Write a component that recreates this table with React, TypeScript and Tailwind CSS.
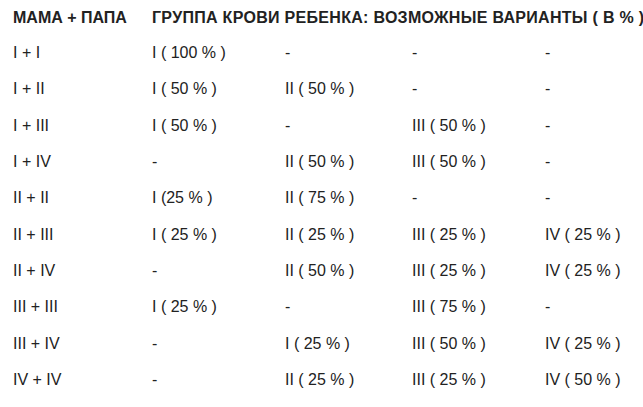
const rows: [string, string, string, string, string][] = [
  ["I + I", "I ( 100 % )", "-", "-", "-"],
  ["I + II", "I ( 50 % )", "II ( 50 % )", "-", "-"],
  ["I + III", "I ( 50 % )", "-", "III ( 50 % )", "-"],
  ["I + IV", "-", "II ( 50 % )", "III ( 50 % )", "-"],
  ["II + II", "I (25 % )", "II ( 75 % )", "-", "-"],
  ["II + III", "I ( 25 % )", "II ( 25 % )", "III ( 25 % )", "IV ( 25 % )"],
  ["II + IV", "-", "II ( 50 % )", "III ( 25 % )", "IV ( 25 % )"],
  ["III + III", "I ( 25 % )", "-", "III ( 75 % )", "-"],
  ["III + IV", "-", "I ( 25 % )", "III ( 50 % )", "IV ( 25 % )"],
  ["IV + IV", "-", "II ( 25 % )", "III ( 25 % )", "IV ( 50 % )"],
];

const cols = "grid grid-cols-[139px_133px_127px_133px_1fr] items-center";

export default function App() {
  return (
    <div className="w-[643px] h-[407px] bg-white pl-[13px] text-[16px] leading-none text-[#222] font-['Liberation_Sans',Arial,sans-serif]">
      <div className={`${cols} h-[35px] font-bold`}>
        <div>МАМА + ПАПА</div>
        <div className="col-span-4 whitespace-nowrap tracking-[0.3px]">
          ГРУППА КРОВИ РЕБЕНКА: ВОЗМОЖНЫЕ ВАРИАНТЫ ( В % )
        </div>
      </div>
      {rows.map((r) => (
        <div key={r[0]} className={`${cols} h-[36.33px]`}>
          {r.map((c, i) => (
            <div key={i} className="whitespace-nowrap">
              {c}
            </div>
          ))}
        </div>
      ))}
    </div>
  );
}
